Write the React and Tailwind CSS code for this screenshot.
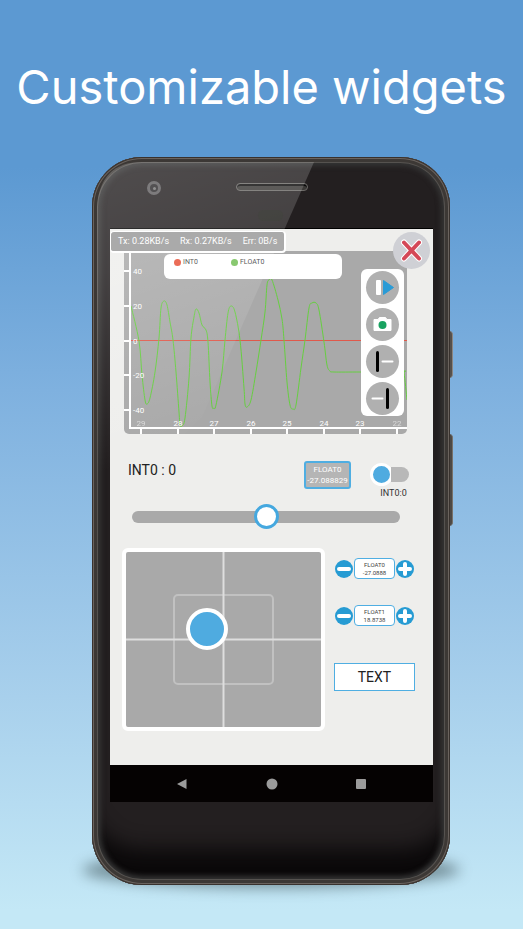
import React from "react";

const ROBOTO = "font-[Roboto,'Liberation_Sans',sans-serif]";

const SAMPLES = [
  [131, 306], [139, 341], [142, 375], [145, 400], [147, 404], [150, 398], [155, 372], [159, 338],
  [161, 308], [164, 301], [167, 305], [170, 322], [173, 340], [176, 372], [179, 412], [180, 425],
  [182, 426], [185, 418], [189, 378], [191, 338], [194, 317], [196, 309], [199, 313], [202, 325],
  [206, 330], [208, 342], [210, 382], [212, 406], [214, 408], [216, 405], [222, 372], [225, 340],
  [228, 313], [231, 306], [235, 312], [240, 340], [244, 388], [245, 404], [247, 407], [251, 400],
  [256, 372], [261, 340], [265, 312], [267, 285], [269, 280], [272, 280], [278, 300], [282, 319],
  [284, 340], [287, 382], [290, 405], [293, 409], [296, 405], [301, 368], [305, 340], [309, 308],
  [312, 303], [316, 303], [319, 310], [324, 342], [327, 365], [330, 371], [334, 372], [361, 372],
  [402, 372], [404, 373], [407, 400],
];

const Y_TICKS = [[40, 271], [20, 306], [0, 341], [-20, 375], [-40, 410]];
const X_TICKS = [[29, 141], [28, 178], [27, 214], [26, 251], [25, 287], [24, 324], [23, 360], [22, 397]];

function smoothPath(points) {
  let d = `M${points[0][0]} ${points[0][1]}`;
  for (let i = 0; i < points.length - 1; i++) {
    const p0 = points[Math.max(0, i - 1)];
    const p1 = points[i];
    const p2 = points[i + 1];
    const p3 = points[Math.min(points.length - 1, i + 2)];
    d += `C${p1[0] + (p2[0] - p0[0]) / 6} ${p1[1] + (p2[1] - p0[1]) / 6} ${p2[0] - (p3[0] - p1[0]) / 6} ${p2[1] - (p3[1] - p1[1]) / 6} ${p2[0]} ${p2[1]}`;
  }
  return d;
}

function Chart() {
  return (
    <svg viewBox="124 251 283 183" className="block w-full" role="img" aria-label="INT0 and FLOAT0 over time">
      <path d="M124 251H407V429A5 5 0 0 1 402 434H129A5 5 0 0 1 124 429Z" fill="#a9a9a9" />
      <path d="M131 340.5H407" stroke="#e0594b" strokeWidth="1" />
      <path d={smoothPath(SAMPLES)} fill="none" stroke="#66cf40" strokeWidth="1" />
      <g fill="#fff" className={`${ROBOTO} text-[8px]`}>
        {Y_TICKS.map(([v, y]) => (
          <text key={v} x="133" y={y + 3}>{v}</text>
        ))}
        {X_TICKS.map(([v, x]) => (
          <text key={v} x={x} y="426" textAnchor="middle" opacity={v === 29 || v === 22 ? 0.55 : 1}>{v}</text>
        ))}
      </g>
      <g stroke="#fff" strokeWidth="2">
        <path d="M130 251V429M129 428H407" />
        {Y_TICKS.map(([v, y]) => (
          <path key={v} d={`M124 ${y}H130`} />
        ))}
        {X_TICKS.map(([v, x]) => (
          <path key={v} d={`M${x} 428V434`} />
        ))}
      </g>
    </svg>
  );
}

function ToolButton({ label, children }) {
  return (
    <button aria-label={label} className="block size-[33px] rounded-full bg-[#b0b0b0]">
      <svg viewBox="0 0 33 33" className="block size-full">{children}</svg>
    </button>
  );
}

function Toolbar() {
  return (
    <div className="absolute right-[3px] top-[18px] flex h-[147px] w-[43px] flex-col items-center justify-center gap-1 rounded-md bg-white">
      <ToolButton label="Resume">
        <rect x="10" y="9" width="5" height="15" rx="1" fill="#fff" />
        <path d="M17.500 9.500L27.500 16.500L17.500 23.500Z" fill="#2a9bd6" stroke="#2a9bd6" strokeLinejoin="round" />
      </ToolButton>
      <ToolButton label="Screenshot">
        <path d="M8 11.500H12L13.500 9.500H19.500L21 11.500H25V22.500H8Z" fill="#fff" stroke="#fff" strokeLinejoin="round" />
        <circle cx="16.500" cy="17" r="4" fill="#18a260" />
      </ToolButton>
      <ToolButton label="Align to left edge">
        <path d="M11.500 7.500V25.500" stroke="#000" strokeWidth="3" strokeLinecap="round" />
        <path d="M16.500 16.500H26.500" stroke="#fff" strokeWidth="2" strokeLinecap="round" />
      </ToolButton>
      <ToolButton label="Align to right edge">
        <path d="M21.500 7.500V25.500" stroke="#000" strokeWidth="3" strokeLinecap="round" />
        <path d="M6.500 16.500H16.500" stroke="#fff" strokeWidth="2" strokeLinecap="round" />
      </ToolButton>
    </div>
  );
}

function Stepper({ name, value }) {
  return (
    <div className="flex h-[21px] items-center gap-px">
      <button aria-label={`Decrease ${name}`} className="size-[18px] shrink-0 rounded-full bg-[#269bd3]">
        <svg viewBox="0 0 18 18" className="block size-full"><path d="M4 9H14" stroke="#fff" strokeWidth="4" strokeLinecap="round" /></svg>
      </button>
      <div className="flex h-[21px] w-[41px] flex-col items-center justify-center rounded-[4px] border border-[#4faee2] bg-white text-[6px] leading-[8px] text-[#444]">
        <span>{name}</span>
        <span>{value}</span>
      </div>
      <button aria-label={`Increase ${name}`} className="size-[18px] shrink-0 rounded-full bg-[#269bd3]">
        <svg viewBox="0 0 18 18" className="block size-full"><path d="M4 9H14M9 4V14" stroke="#fff" strokeWidth="4" strokeLinecap="round" /></svg>
      </button>
    </div>
  );
}

function Joystick() {
  return (
    <div className="relative h-[183px] w-[203px] rounded-md border-4 border-white bg-[#a9a9a9]">
      <svg viewBox="0 0 195 175" className="block size-full" fill="none">
        <rect x="48" y="43" width="99" height="89" rx="4" stroke="#c1c1c1" strokeWidth="2" />
        <path d="M97.500 0V175M0 87.500H195" stroke="#dedede" strokeWidth="2" />
      </svg>
      <button aria-label="Joystick" className="absolute left-[60px] top-[56px] size-[42px] rounded-full border-4 border-white bg-[#4fabe0]" />
    </div>
  );
}

function Screen() {
  return (
    <div className="flex flex-col bg-[#eeeeec] pb-[34px]">
      <div className="relative z-10 flex h-[22px] items-start justify-between pt-[2px]">
        <div className="flex h-[22px] items-center gap-[11px] whitespace-pre rounded-[4px] border border-r-2 border-b-2 border-white bg-[#aaa] px-[7px] text-[9px] text-white">
          <span>Tx: 0.28KB/s</span>
          <span>Rx: 0.27KB/s</span>
          <span>Err: 0B/s</span>
        </div>
        <button aria-label="Close" className="mr-[3px] mt-px size-[37px] shrink-0 rounded-full bg-[#cfd0d5]">
          <svg viewBox="0 0 37 37" className="block size-full" strokeLinecap="round">
            <path d="M11 10.500L26 26.500M26 10.500L11 26.500" stroke="#fff" strokeWidth="6" />
            <path d="M11 10.500L26 26.500M26 10.500L11 26.500" stroke="#d44857" strokeWidth="4" />
          </svg>
        </button>
      </div>
      <div className="relative ml-[14px] mr-[26px]">
        <Chart />
        <div className="absolute left-[40px] top-[3px] flex h-[25px] w-[178px] items-start rounded-md bg-white px-[10px] pt-[4px] text-[7px] leading-[8px] text-[#444]">
          <span className="flex w-[57px] items-center gap-[2px]"><i className="size-[7px] rounded-full bg-[#e8533a]" />INT0</span>
          <span className="flex items-center gap-[2px]"><i className="size-[7px] rounded-full bg-[#76c05a]" />FLOAT0</span>
        </div>
        <Toolbar />
      </div>
      <div className="mt-[26px] flex items-start pl-[18px] pr-[24px]">
        <span className="text-[14px] leading-5 text-[#222]">INT0 : 0</span>
        <div className="ml-auto mt-px flex h-[28px] w-[47px] flex-col items-center justify-center rounded-[3px] border-2 border-[#4faee2] bg-[#b5b5b5] text-[8px] leading-[11px] text-white">
          <span>FLOAT0</span>
          <span>-27.088829</span>
        </div>
        <label className="ml-[19px] mt-[3px] flex w-[39px] flex-col text-[9px] leading-[12px] text-[#333]">
          <input type="checkbox" role="switch" className="peer sr-only" />
          <span className="flex h-[23px] items-center">
            <span className="size-[23px] rounded-full border-[3px] border-white bg-[#4fabe0]" />
            <span className="-ml-[2px] h-[15px] flex-1 rounded-r-full bg-[#b8b8b8]" />
          </span>
          <span className="self-center pl-[8px] pt-px">INT0:0</span>
        </label>
      </div>
      <div className="mt-[5px] flex h-[25px] items-center pl-[22px] pr-[33px]">
        <input
          type="range"
          aria-label="INT0 value"
          className="h-[12px] w-full appearance-none rounded-full bg-[#a9a9a9] [&::-webkit-slider-thumb]:size-[25px] [&::-webkit-slider-thumb]:appearance-none [&::-webkit-slider-thumb]:rounded-full [&::-webkit-slider-thumb]:border-[3px] [&::-webkit-slider-thumb]:border-solid [&::-webkit-slider-thumb]:border-[#45a8df] [&::-webkit-slider-thumb]:bg-white"
        />
      </div>
      <div className="mt-[19px] flex justify-between pl-[12px] pr-[18px]">
        <Joystick />
        <div className="flex flex-col items-center pt-[10px]">
          <Stepper name="FLOAT0" value="-27.0888" />
          <div className="h-[26px]" />
          <Stepper name="FLOAT1" value="18.8738" />
          <button className="mt-[37px] h-[28px] w-[81px] border border-[#4faee2] bg-white text-[14px] leading-5 text-[#222]">TEXT</button>
        </div>
      </div>
    </div>
  );
}

function NavBar() {
  return (
    <nav className="flex h-[37px] items-center justify-between bg-[#050202] px-[66px] text-[#9b9b9b]">
      <button aria-label="Back"><svg viewBox="0 0 12 12" className="block size-3" fill="currentColor"><path d="M1 6L10.500 1V11Z" /></svg></button>
      <button aria-label="Home"><svg viewBox="0 0 12 12" className="block size-3" fill="currentColor"><circle cx="6" cy="6" r="5.500" /></svg></button>
      <button aria-label="Recent apps"><svg viewBox="0 0 12 12" className="block size-3" fill="currentColor"><rect x="1" y="1" width="10" height="10" rx="1" /></svg></button>
    </nav>
  );
}

function Phone() {
  return (
    <div className="relative ml-[92px] mr-[73px] mt-[35px]">
      <div className="absolute inset-x-[-10px] bottom-[-3px] h-[36px] rounded-[50%] bg-[#2d4043] opacity-50 blur-[7px]" />
      <div className="absolute right-[-3px] top-[174px] h-[47px] w-[4px] rounded-r-sm border-r border-[#8b8580] bg-[#55504c]" />
      <div className="absolute right-[-3px] top-[277px] h-[92px] w-[4px] rounded-r-sm border-r border-[#77716a] bg-[#4d4945]" />
      <div className="relative overflow-hidden rounded-[50px] bg-[#231f20] pl-[18px] pr-[17px] shadow-[inset_0_0_0_1px_#39322e,inset_0_0_0_2px_#6a635e,inset_0_0_0_5px_#3c3835,inset_0_0_0_6px_#55524f,inset_0_0_5px_9px_#343434,inset_0_-44px_20px_-8px_#0b090a]">
        <div className="flex h-[72px] items-start justify-center">
          <div className="mt-[26px] h-[8px] w-[72px] rounded-full border border-[#6b6966] bg-[#3b3937] shadow-[inset_0_2px_0_#0c0b0b]" />
        </div>
        <div className="-mt-px border-t border-black">
          <Screen />
          <NavBar />
        </div>
        <div className="h-[83px]" />
        <div className="absolute left-[55px] top-[24px] flex size-[14px] items-center justify-center rounded-full border-[3px] border-[#5f5d5f] bg-[#2b292b]">
          <div className="size-[3px] rounded-full bg-[#777]" />
        </div>
        <div className="absolute left-[166px] top-[53px] h-[11px] w-[25px] rounded-full bg-[#20201c]" />
        <svg viewBox="0 0 358 728" className="pointer-events-none absolute left-0 top-0 w-full">
          <defs>
            <linearGradient id="glare" gradientUnits="userSpaceOnUse" x1="60" y1="0" x2="160" y2="300">
              <stop offset="0" stopColor="#fff" stopOpacity=".2" />
              <stop offset=".3" stopColor="#fff" stopOpacity=".16" />
              <stop offset=".6" stopColor="#fff" stopOpacity=".08" />
              <stop offset=".9" stopColor="#fff" stopOpacity="0" />
            </linearGradient>
          </defs>
          <path d="M5 50Q8 5 50 5H222L110 260L5 360Z" fill="url(#glare)" />
        </svg>
      </div>
    </div>
  );
}

export default function App() {
  return (
    <main className={`min-h-screen bg-[linear-gradient(#5c99d2_0%,#5c99d2_18%,#7fb1df_42%,#a8d0ec_75%,#c4e8f6_98%)] ${ROBOTO}`}>
      <div className="mx-auto max-w-[523px] pb-[44px] pt-[52px]">
        <h1 className="whitespace-nowrap text-center font-[Inter,'Liberation_Sans',sans-serif] text-[47px] font-normal leading-[70px] text-white">
          Customizable widgets
        </h1>
        <Phone />
      </div>
    </main>
  );
}
